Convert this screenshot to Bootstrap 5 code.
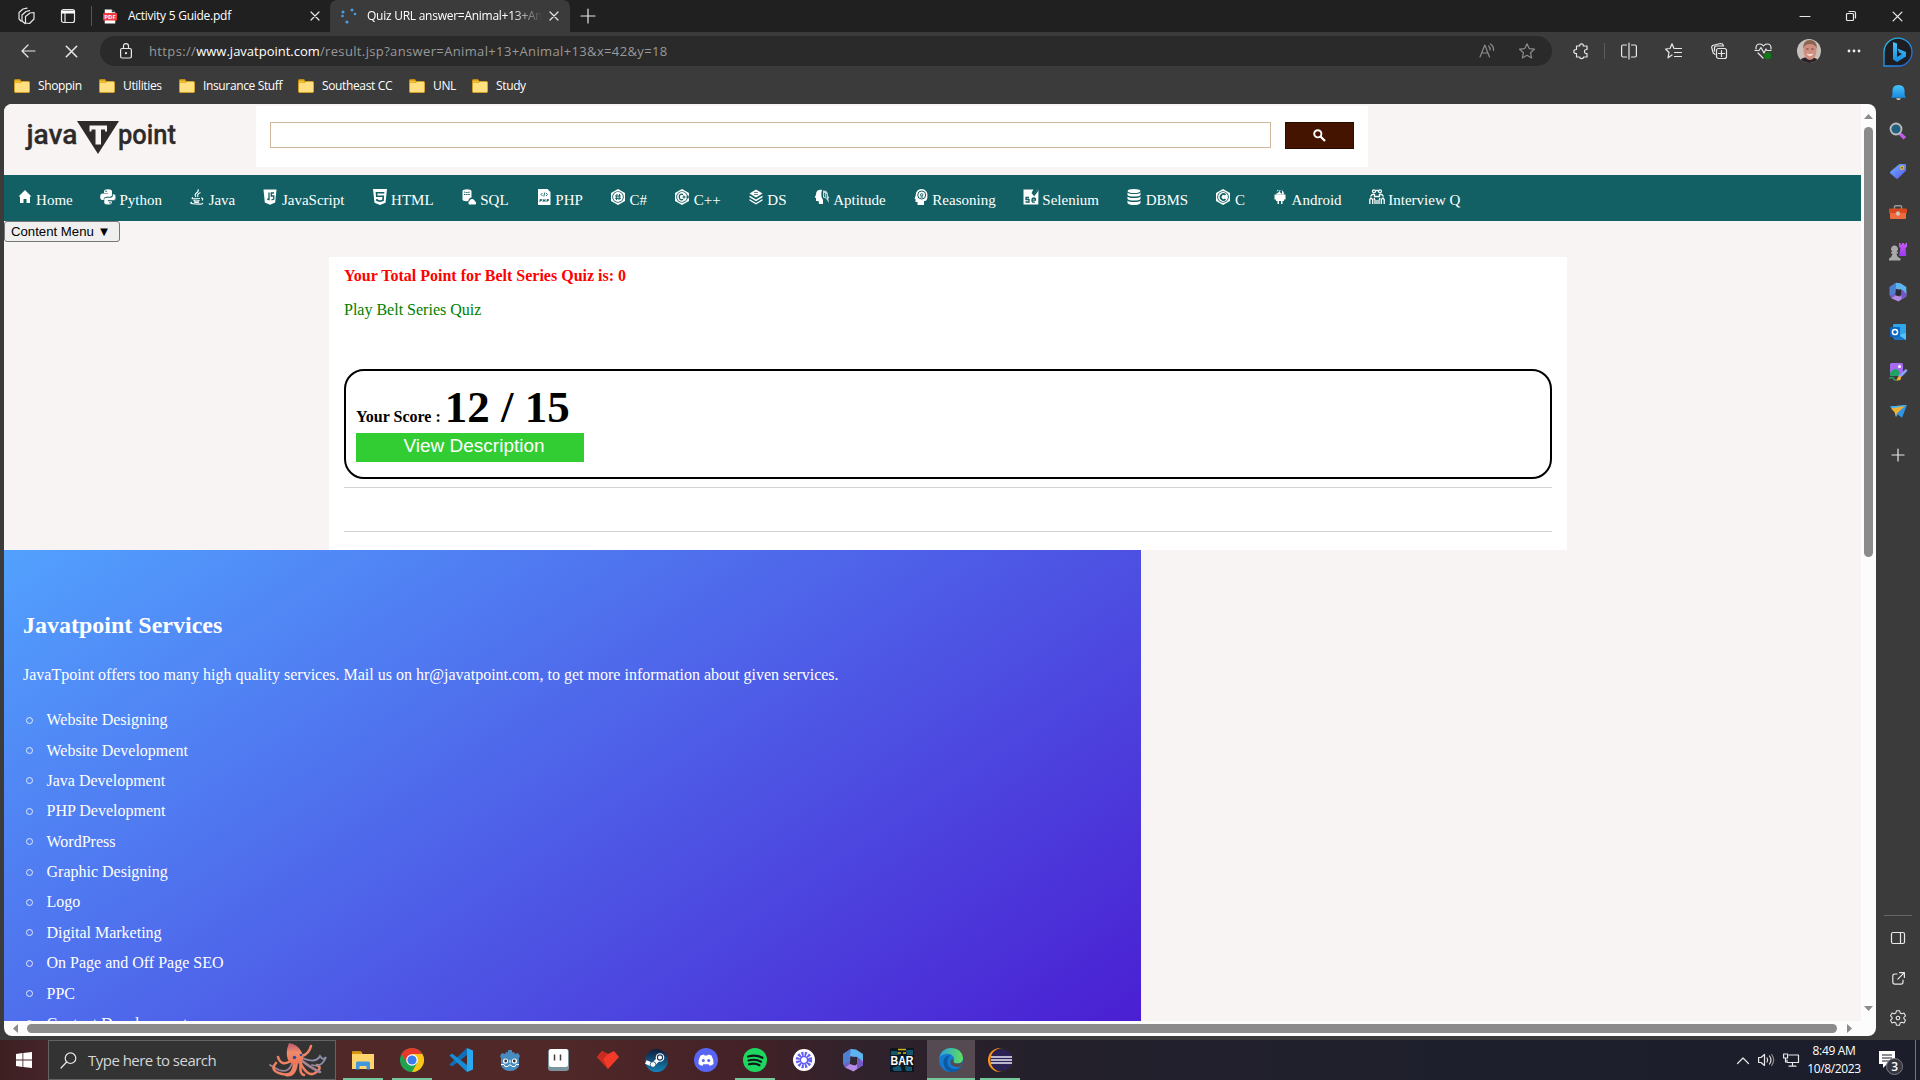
<!DOCTYPE html>
<html lang="en">
<head>
<meta charset="utf-8">
<title>Quiz result</title>
<link href="https://cdn.jsdelivr.net/npm/bootstrap@5.3.0/dist/css/bootstrap.min.css" rel="stylesheet">
<style>
body{width:1920px;height:1080px;overflow:hidden;background:#3b3b3b;font-family:"Open Sans","Noto Sans",sans-serif;font-size:12px;line-height:16px;color:#fff}
svg{display:block;overflow:visible;flex:none}
.ln{fill:none;stroke:#e8e8e8;stroke-width:1.2;stroke-linecap:round;stroke-linejoin:round}
.titlebar{height:32px;background:#202020}
.tab-pdf{width:238px;padding-left:10px}
.tab-on{width:240px;height:32px;background:#3b3b3b;border-radius:7px 7px 0 0;padding-left:10px}
.tab-text{letter-spacing:-.26px;white-space:nowrap;overflow:hidden}
.fade-end{width:176px;-webkit-mask-image:linear-gradient(90deg,#000 82%,transparent);mask-image:linear-gradient(90deg,#000 82%,transparent)}
.winbtn{width:46px}
.leftcol{width:1876px}
.tools{height:38px}
.addr{width:1456px;height:30px;border-radius:15px;background:#2a2a2a}
.url{font-size:13px;color:#999;white-space:nowrap;letter-spacing:.36px}
.url b{font-weight:400;color:#fff;letter-spacing:0}
.tcell{width:45px}
.bookmarks{height:34px;padding:0 0 2px 14px;letter-spacing:-.36px}
.bm{white-space:nowrap}
.viewport{width:1872px;height:932px;margin-left:4px;border-radius:8px;background:#fcfcfc;overflow:hidden}
.pagearea{width:1857px;height:917px;background:#f8f4f3;overflow:hidden;font-family:"Liberation Serif",serif;font-size:16px;color:#000}
.head{height:71px;padding-top:2px}
.logo-box{width:252px;padding:15px 0 0 20px}
.gsearch{width:1112px;height:61px;background:#fff;padding:16px 14px 0}
.gsearch input{width:1001px;height:26px;border:1px solid #cfb79c;outline:0}
.gsearch button{width:69px;height:27px;background:#451400;border:1px solid #2a0b00;margin-left:14px}
.topnav{height:46px;background:#125f64;font-size:15px;line-height:18px;color:#fff}
.topnav div{padding:16px 14.58px 0 12.5px;white-space:nowrap}
.topnav svg{width:16px;height:16px;margin:-2px 3.6px 0 0;fill:#fff}
.cmenu{width:116px;height:21px;border:1px solid #767676;border-radius:3px;background:#efefef;font:13.2px/17px "Liberation Sans",sans-serif;padding:0 0 0 6px;text-align:left;color:#000}
.resultcard{width:1238px;height:293px;margin:15px 0 0 325px;background:#fff;padding:10px 15px 0}
.red-line{color:red;font-weight:700;line-height:18px}
.green-line{color:green;line-height:18px;margin-top:16px}
.scorebox{height:110px;margin-top:50px;border:2px solid #000;border-radius:20px;padding:11px 10px 0;font-weight:700}
.scoreline{line-height:50px;height:51px;white-space:nowrap}
.scoreline span{font-size:45px}
.vd{width:228px;height:29px;background:#32cd32;color:#fff;font:19px/25px "Liberation Sans",sans-serif;text-align:center;padding-left:8px}
.rule1{height:1px;background:#d3d3d3;margin-top:8px}
.rule2{height:1px;background:#d3d3d3;margin-top:43px}
.services{width:1137px;height:471px;background:linear-gradient(146deg,#52a1fe,#4a1fd2);color:#fff;padding:61px 19px 0;overflow:hidden}
.services h2{font-size:24px;font-weight:700;line-height:28px;margin:0}
.services p{margin:26px 0 20px;line-height:20px}
.services ul{list-style:none;padding:0;margin:0}
.services li{height:30.38px;line-height:30px;display:flex;align-items:center}
.services li::before{content:"";width:7px;height:7px;border:1.2px solid #e3ebff;border-radius:50%;margin:0 13.5px 0 3px}
.vbar{width:15px;height:917px;padding:10px 0}
.vthumb{width:9px;height:430px;border-radius:5px;background:#8b8b8b;margin-top:8px}
.hbar{height:15px;padding:0 9px}
.hthumb{width:1810px;height:9px;border-radius:5px;background:#8b8b8b}
.sidebar{width:44px;padding:3px 0 2px}
.sidebar>div{height:40px;display:flex;align-items:center;justify-content:center}
.taskbar{height:40px;background:linear-gradient(90deg,#3d1f22 0,#45242a 48px,#502828 340px,#502828 560px,#422127 760px,#31222b 850px,#23202b 1050px,#1d1f2c 1500px,#1b1d2b)}
.startb{width:48px}
.tsearch{width:288px;height:40px;background:#333;border:1px solid #646464;color:#d6d6d6;font-size:15px;padding-left:11px}
.app{width:49px;height:40px;display:flex;align-items:center;justify-content:center;border:0 solid #76c79b}
.app.run{width:40px;margin:0 4.5px;border-bottom-width:2px;padding-top:2px}
.app.on{width:48px;margin:0 .5px;background:#564a52}
.clock{width:70px;text-align:center;line-height:18px;letter-spacing:-.35px}
</style>
<script src="https://cdn.jsdelivr.net/npm/bootstrap@5.3.0/dist/js/bootstrap.bundle.min.js"></script>
</head>
<body class="d-flex flex-column m-0">
<svg width="0" height="0" class="position-absolute">
 <defs>
  <linearGradient id="gb" x1="0" y1="0" x2="1" y2="1"><stop offset="0" stop-color="#27c4e8"/><stop offset="1" stop-color="#2360e8"/></linearGradient>
  <linearGradient id="gc" x1="0" y1="0" x2="0" y2="1"><stop offset="0" stop-color="#45c3fa"/><stop offset="1" stop-color="#1a8be0"/></linearGradient>
  <linearGradient id="gp" x1="0" y1="0" x2="1" y2="1"><stop offset="0" stop-color="#6fb4ff"/><stop offset="1" stop-color="#5a55f0"/></linearGradient>
  <linearGradient id="gv" x1="0" y1="0" x2="0" y2="1"><stop offset="0" stop-color="#c85cf5"/><stop offset="1" stop-color="#9a3af0"/></linearGradient>
  <linearGradient id="go" x1="0" y1="0" x2="0" y2="1"><stop offset="0" stop-color="#b9596c"/><stop offset=".45" stop-color="#f08a6c"/><stop offset="1" stop-color="#ef7350"/></linearGradient>
  <linearGradient id="gs" x1="0" y1="0" x2="0" y2="1"><stop offset="0" stop-color="#111d3a"/><stop offset="1" stop-color="#1482b8"/></linearGradient>
  <linearGradient id="ge" x1="0" y1="0" x2="1" y2="0"><stop offset="0" stop-color="#2a9fe0"/><stop offset="1" stop-color="#5ee05a"/></linearGradient>
  <symbol id="folder" viewBox="0 0 16 16"><path d="M0 2.500Q0 1 1.500 1H6l1.500 2H14.500Q16 3 16 4.500V13.500Q16 15 14.500 15H1.500Q0 15 0 13.500Z" fill="#c08a12"/><path d="M.8 5H6L8 3.800h6.500q.8 0 .8.900v8.600q0 .9-.8.900H1.600q-.8 0-.8-.9Z" fill="#ffdf80"/><path d="M.8 2.500h5L7 3.600 5.800 4.800H.8Z" fill="#f5c430"/></symbol>
  <symbol id="m365" viewBox="0 0 24 24"><path d="M9.500 1 14 4v7L9 13.500v2.800L4 19.500 2 16V6Z" fill="#6f63c4"/><path d="M9.500 1 15 1.500 22 6v8l-6-5-7-1Z" fill="#5cb5ee"/><path d="M9.500 1 9 8v5.500L2 16V6Z" fill="#4f7fd0"/><path d="m4 19.500 5-3.500 5 1.500 8-6V17l-9.500 6.500Z" fill="#b58ae6"/><path d="m16 9 6 5v3.500L16 20.500V15Z" fill="#7458c8"/><path d="m9.500 8.500 6 1v5l-3.500 2-3-1Z" fill="#2d2b33"/></symbol>
  <symbol id="xx" viewBox="0 0 10 10"><path d="M1 1 9 9M9 1 1 9" class="ln"/></symbol>
  <symbol id="cshield" viewBox="0 0 16 16"><path d="M8 0 15 4v8l-7 4-7-4V4Z" fill="#fff"/><circle cx="8" cy="8" r="5.800" fill="#125f64"/><circle cx="8" cy="8" r="4.900" fill="#fff"/></symbol>
 </defs>
</svg>

<header class="titlebar d-flex align-items-center">
 <svg width="18" height="18" viewBox="0 0 18 18" class="ln" style="margin-left:17px"><path d="M2 5.500 6 2l4-.8M2 5.500V12l2 2M5 8l4-3.500 3.500-.8M5 8v6l3 2.500M8.500 9.500 13 6l4-.5V12l-4.500 4.500-4-.5Z"/></svg>
 <svg width="16" height="16" viewBox="0 0 16 16" style="margin-left:25px"><rect x="1.500" y="1.500" width="13" height="13" rx="2" class="ln"/><path d="M1.500 2.500h13v3h-13Z" fill="#fff"/><path d="M5 5v9" class="ln"/></svg>
 <div style="width:1px;height:20px;background:#555;margin-left:15px"></div>
 <div class="tab-pdf d-flex align-items-center">
  <svg width="14" height="17" viewBox="0 0 16 18" style="margin:0 1px"><path d="M2 1h8l4 3v13H2Z" fill="#fff"/><path d="M10 1v3h4" fill="#333"/><rect y="5" width="16" height="8.500" rx="1" fill="#f03c3c"/><text x="1.500" y="11.500" font-size="6" font-weight="700" fill="#fff" textLength="13" lengthAdjust="spacingAndGlyphs">PDF</text></svg>
  <span class="tab-text" style="margin-left:10px;width:180px">Activity 5 Guide.pdf</span>
  <svg width="10" height="10" style="margin-left:2px"><use href="#xx"/></svg>
 </div>
 <div class="tab-on d-flex align-items-center">
  <svg width="16" height="16" viewBox="0 0 16 16" fill="#4d9de0"><circle cx="3" cy="4" r="1.500"/><circle cx="2.500" cy="8" r="1.300"/><circle cx="12" cy="2" r="1.500"/><circle cx="15" cy="6" r="1.300"/><circle cx="7" cy="14" r="1.600"/></svg>
  <span class="tab-text fade-end" style="margin-left:11px">Quiz URL answer=Animal+13+An</span>
  <svg width="10" height="10" style="margin-left:6px"><use href="#xx"/></svg>
 </div>
 <svg width="14" height="14" viewBox="0 0 14 14" class="ln" style="margin-left:11px"><path d="M7 0v14M0 7h14"/></svg>
 <div class="d-flex ms-auto">
  <div class="winbtn d-flex justify-content-center"><svg width="10" height="10" class="ln"><path d="M0 5.500h10"/></svg></div>
  <div class="winbtn d-flex justify-content-center"><svg width="10" height="10" class="ln"><rect x=".5" y="2.500" width="7" height="7" rx="1"/><path d="M3 .5h5q1.500 0 1.500 1.500v5"/></svg></div>
  <div class="winbtn d-flex justify-content-center"><svg width="11" height="11"><use href="#xx"/></svg></div>
 </div>
</header>

<main class="d-flex" style="height:1008px">
 <section class="leftcol">
  <div class="tools d-flex align-items-center">
   <svg width="14" height="12" class="ln" style="margin-left:21px"><path d="M14 6H1M7 0 1 6l6 6"/></svg>
   <svg width="13" height="13" style="margin-left:30px"><use href="#xx"/></svg>
   <div class="addr d-flex align-items-center" style="margin-left:22px">
    <svg width="12" height="16" viewBox="0 0 12 16" class="ln" style="margin-left:20px"><rect x=".6" y="5.500" width="10.800" height="9.500" rx="1.500"/><path d="M3.500 5.500V3q0-2.300 2.500-2.300T8.500 3v2.500"/><circle cx="6" cy="10.200" r=".5" fill="#fff"/></svg>
    <span class="url" style="margin-left:17px">https://<b>www.javatpoint.com</b>/result.jsp?answer=Animal+13+Animal+13&amp;x=42&amp;y=18</span>
    <svg width="16" height="16" viewBox="0 0 16 16" class="ln ms-auto" style="stroke:#8c8c8c;margin-right:24px"><path d="M1 14 5.800 2 10.500 14M2.800 10h6M9.500 3q2 1.500 1.500 4M11.500 1q3.500 2.500 3 6.500"/></svg>
    <svg width="16" height="16" viewBox="0 0 16 16" class="ln" style="stroke:#8c8c8c;margin-right:17px"><path d="m8 .8 2.200 4.800 5.200.6-3.900 3.500 1.100 5.200L8 12.300l-4.600 2.600 1.100-5.200L.6 6.200l5.200-.6Z"/></svg>
   </div>
   <div class="d-flex align-items-center" style="margin-left:6.500px">
    <div class="tcell d-flex justify-content-center"><svg width="16" height="16" viewBox="0 0 16 16" class="ln"><path d="M3.500 3h3.200Q6.500.8 8.500.8T10.300 3H14v3.500Q11.500 6.300 11.500 8.500T14 10.500V14h-3.500q0 1.700-1.900 1.700T6.700 14H3.500V10.500Q.8 10.700.8 8.500T3.500 6.500Z"/></svg></div>
    <div style="width:1px;height:16px;background:#5c5c5c;margin-right:1.500px"></div>
    <div class="tcell d-flex justify-content-center"><svg width="16" height="16" viewBox="0 0 16 16" class="ln"><path d="M8 0v16M5.500 2H2Q.6 2 .6 3.500v9Q.6 14 2 14h3.500M10.500 2H14q1.400 0 1.400 1.500v9Q15.400 14 14 14h-3.500"/></svg></div>
    <div class="tcell d-flex justify-content-center"><svg width="17" height="16" viewBox="0 0 17 16" class="ln"><path d="M9 5.500 7 .8 5 5.500.6 6l3.400 3.500-1 5.300L7 12M10 5.500h6.500M9.500 9.500h7M9.500 13.500h7"/></svg></div>
    <div class="tcell d-flex justify-content-center"><svg width="16" height="16" viewBox="0 0 16 16" class="ln"><rect x="5.500" y="5.500" width="10" height="10" rx="2"/><path d="M10.500 7.500v6M7.500 10.500h6M12.500 3 11.500 1 9.500.5 1.500 2.500.6 4l1.600 6 1.800 1.300M3.500 8V5q0-2 2-2h6"/></svg></div>
    <div class="tcell d-flex justify-content-center"><svg width="17" height="16" viewBox="0 0 17 16" class="ln"><path d="M1 6Q.5 1 5 1q2 0 3.500 2Q10 1 12 1q4.500 0 4 5M0 7.500h4l2-3 3 5.500 2-4 1 1.500h4M3 10l5 5"/><circle cx="12.800" cy="12.800" r="3.500" fill="#0f7b16" stroke="none"/></svg></div>
    <div class="tcell d-flex justify-content-center"><svg width="24" height="24" viewBox="0 0 24 24"><defs><clipPath id="av"><circle cx="12" cy="12" r="12"/></clipPath></defs><g clip-path="url(#av)"><rect width="24" height="24" fill="#c9c0bb"/><path d="M2 24q1-6 10-6t10 6Z" fill="#2a2224"/><ellipse cx="13" cy="12" rx="6.500" ry="9" fill="#cf8f80"/><path d="M6 10Q6 1 13 1t7 9Q18 5 13 5T6 10Z" fill="#8a6552"/><path d="M9.500 14.500q3.500 1 7 0-1 2.500-3.500 2.500t-3.500-2.500Z" fill="#f5dcd4"/><path d="M9.500 10h2M14.500 10h2" stroke="#603030"/></g></svg></div>
    <div class="tcell d-flex justify-content-center"><svg width="14" height="4" fill="#eee"><circle cx="2" cy="2" r="1.400"/><circle cx="7" cy="2" r="1.400"/><circle cx="12" cy="2" r="1.400"/></svg></div>
   </div>
  </div>
  <nav class="bookmarks d-flex align-items-center">
   <div class="bm d-flex" style="width:85px"><svg width="16" height="16" class="me-2"><use href="#folder"/></svg>Shoppin</div>
   <div class="bm d-flex" style="width:80px"><svg width="16" height="16" class="me-2"><use href="#folder"/></svg>Utilities</div>
   <div class="bm d-flex" style="width:119px"><svg width="16" height="16" class="me-2"><use href="#folder"/></svg>Insurance Stuff</div>
   <div class="bm d-flex" style="width:111px"><svg width="16" height="16" class="me-2"><use href="#folder"/></svg>Southeast CC</div>
   <div class="bm d-flex" style="width:63px"><svg width="16" height="16" class="me-2"><use href="#folder"/></svg>UNL</div>
   <div class="bm d-flex"><svg width="16" height="16" class="me-2"><use href="#folder"/></svg>Study</div>
  </nav>

  <div class="viewport">
   <div class="d-flex">
    <div class="pagearea">
     <div class="head d-flex">
      <div class="logo-box"><svg width="156" height="34" viewBox="0 0 156 34" fill="#2d2a29" font-family="Roboto" font-weight="500" font-size="27"><text x="2.500" y="22.500" textLength="51" lengthAdjust="spacingAndGlyphs" stroke="#2d2a29" stroke-width=".3">java</text><path d="M53 0h42L74 33Z"/><path d="M65.500 4.500h17.500v6h-2v-2h-4v15h-5.500v-15h-4v2h-2Z" fill="#f8f4f3"/><text x="94" y="22.500" textLength="58" lengthAdjust="spacingAndGlyphs" stroke="#2d2a29" stroke-width=".3">point</text></svg></div>
      <div class="gsearch d-flex align-items-start"><input type="text"><button class="d-flex align-items-center justify-content-center p-0"><svg width="13" height="13" viewBox="0 0 13 13" fill="none" stroke="#fff"><circle cx="4.800" cy="4.800" r="3.600" stroke-width="1.900"/><path d="m7.500 7.500 4.500 4.500" stroke-width="2.300"/></svg></button></div>
     </div>
     <div class="topnav d-flex">
      <div class="d-flex"><svg viewBox="0 0 16 16"><path d="M8 1 14.500 7.500H13V14H9.500V10h-3v4H3V7.500H1.500Z"/></svg>Home</div>
      <div class="d-flex"><svg viewBox="0 0 16 16"><path d="M4 4V2.500Q4 .2 8 .2t4 2.300V6q0 1.800-2 1.800H6Q4.200 7.800 4.200 9.500V11H2.500Q.2 11 .2 7.800T2.500 4.500H8V4Z"/><path d="M12.700 5h1q2.100 0 2.100 3.200t-2.300 3.300H8V12h4v1.500q0 2.300-4 2.300t-4-2.300V10q0-1.500 2-1.500h4.500q2.200 0 2.200-2Z" stroke="#125f64" stroke-width=".5"/><circle cx="6" cy="2.200" r=".8" fill="#125f64"/><circle cx="10" cy="13.700" r=".8" fill="#125f64"/></svg>Python</div>
      <div class="d-flex"><svg viewBox="0 0 16 16"><g fill="none" stroke="#fff" stroke-width="1.100"><path d="M9 .3q1 2-1.500 3.700T7 8M11.500 3.500Q7.500 5 9 8M4 8.500q-2 1 0 1.300t7-.3M12 9q3 0 1 2.500M4.500 11.500q3 1 6 0M5 13q3 1 5 0M3 13q-4 1.500 4 2t6.500-1.200"/></g></svg>Java</div>
      <div class="d-flex"><svg viewBox="0 0 16 16"><path d="M1.500.5h13l-1.300 13L8 15.700 2.800 13.500Z"/><path d="M7 3.500v7.200L5 10M12 4H9.300v3h2.500v3l-2.300.8" fill="none" stroke="#125f64" stroke-width="1.300"/></svg>JavaScript</div>
      <div class="d-flex"><svg viewBox="0 0 16 16"><path d="M1 0h14l-1.500 13.800L8 16l-5.500-2.200Z"/><path d="M12.300 3.700H4.500l.3 3.600h6.500l-.3 4-3 .9-3-.9-.1-1.300" fill="none" stroke="#125f64" stroke-width="1.600"/></svg>HTML</div>
      <div class="d-flex"><svg viewBox="0 0 16 16"><path d="M1.500 2Q2 .3 6 .3T10.500 2v6.500Q8 8.500 7.300 12 2 12.500 1.500 11Z"/><path d="M3 5.500h6M3 3Q6 4 9 3" stroke="#125f64" stroke-dasharray="1.500 .6" fill="none"/><path d="M8 15.500Q6.500 13 8.500 12q.5-2.500 3-2t2.500 2.500q2 1 .5 3Z"/></svg>SQL</div>
      <div class="d-flex"><svg viewBox="0 0 16 16"><path d="M2 0h9.500L14.500 3v13H2Z"/><path d="M6.500 4 5 5.500 6.500 7M10 4l1.500 1.500L10 7M8.800 3.500l-1 4M4 13v-2.500h1.500v1H4M7.200 10v3M9 10v3M7.200 11.500H9M11 13v-2.500h1.500v1H11" fill="none" stroke="#125f64" stroke-width=".9"/></svg>PHP</div>
      <div class="d-flex"><svg viewBox="0 0 16 16"><use href="#cshield"/><path d="M7 5 6.500 11M9.500 5 9 11M5 7h6M5 9.300h6" stroke="#125f64" stroke-width="1"/></svg>C#</div>
      <div class="d-flex"><svg viewBox="0 0 16 16"><use href="#cshield"/><path d="M9 5.800Q7.500 4.500 6 5.800t0 4.400q1.500 1.300 3 0M8.500 8h3M10 6.500v3M12.300 8h3M13.800 6.500v3" stroke="#125f64" stroke-width="1.200" fill="none"/></svg>C++</div>
      <div class="d-flex"><svg viewBox="0 0 16 16"><path d="m8 .5 6.500 4L8 8.500l-6.500-4ZM1.500 6.500 8 10.500l6.500-4v1.700L8 12.200 1.500 8.200ZM1.500 10 8 14l6.500-4v1.500L8 15.500l-6.500-4Z"/><path d="M6 3.500h4M6 5.500h4" stroke="#125f64" stroke-width=".7"/></svg>DS</div>
      <div class="d-flex"><svg viewBox="0 0 16 16"><path d="M8 .8Q2 0 2 5.500L.8 8.500 2 9v3h2.500L5 15h4V11L7.500 8Q7 3 8 .8Z"/><path d="M9 1.500q5-.5 5 5l1.300 2.500-1 .5.700 4.500-3-4.500-3-1Z" opacity=".75"/><path d="M10.500 4v4M12.300 5v4" stroke="#125f64" stroke-width=".8"/></svg>Aptitude</div>
      <div class="d-flex"><svg viewBox="0 0 16 16"><path d="M8.500 0Q14.500.5 14.500 6.500T11 12v4H4.500v-3H2.500v-3L1.500 9.500l1.200-3Q3 0 8.500 0Z"/><circle cx="8.700" cy="6" r="4" fill="none" stroke="#125f64" stroke-width="1"/><circle cx="8.700" cy="5.800" r="1.200" fill="none" stroke="#125f64"/><path d="M7.500 8h2.500" stroke="#125f64"/></svg>Reasoning</div>
      <div class="d-flex"><svg viewBox="0 0 16 16"><path d="M.5.500h10L9 3l2 2.500L14.500.5l1 .7-.2 14.300H.5Z"/><path d="M9 3.500 11.200 6 15 1" stroke="#125f64" stroke-width="1.500" fill="none"/><path d="M6 8.500H3v2h3v2.500H2.500M9 11.200h3.500Q12.500 9 10.800 9T9 11.200t1.800 2H12" fill="none" stroke="#125f64" stroke-width="1.300"/></svg>Selenium</div>
      <div class="d-flex"><svg viewBox="0 0 16 16"><ellipse cx="8" cy="2" rx="6.500" ry="2"/><path d="M1.500 3.500Q3 5 8 5t6.500-1.500V6Q13 7.500 8 7.500T1.500 6ZM1.500 7.500Q3 9 8 9t6.500-1.500V10Q13 11.500 8 11.500T1.500 10ZM1.500 11.500Q3 13 8 13t6.500-1.500V14Q13 16 8 16T1.500 14Z"/></svg>DBMS</div>
      <div class="d-flex"><svg viewBox="0 0 16 16"><use href="#cshield"/><path d="M10.500 5.800Q8.500 4 6.500 5.800t0 4.400q2 1.800 4 0" fill="none" stroke="#125f64" stroke-width="1.800"/></svg>C</div>
      <div class="d-flex"><svg viewBox="0 0 16 16"><path d="M4 5Q4.200 2.500 6 1.600L5.300.5M4 5h8Q11.800 2.500 10 1.600L10.700.5M6 1.600h4V5M4 5.200h8v6.800h-1.500v3H9v-3H7v3H5.500v-3H4ZM2.500 5.500H4v5H2.500ZM12 5.500h1.500v5H12Z"/></svg>Android</div>
      <div class="d-flex"><svg viewBox="0 0 16 16"><g fill="none" stroke="#fff" stroke-width="1.300"><circle cx="5" cy="2.300" r="1.500"/><circle cx="11" cy="2.300" r="1.500"/><path d="M7 1.500h2M1.500 7.500Q3 4.500 5.500 5.500v2h5v-2q2.500-1 4 2M.8 15v-4.500L2 9l1.700 1.500V15M6 15v-3.500L5 9M10 15v-3.500L11 9M15.200 15v-4.500L14 9l-1.700 1.500V15M8 11v4"/></g></svg>Interview Q</div>
     </div>
     <button class="cmenu d-block">Content Menu ▼</button>
     <div class="resultcard">
      <div class="red-line">Your Total Point for Belt Series Quiz is: 0</div>
      <div class="green-line">Play Belt Series Quiz</div>
      <div class="scorebox">
       <div class="scoreline">Your Score : <span>12 / 15</span></div>
       <div class="vd">View Description</div>
      </div>
      <div class="rule1"></div>
      <div class="rule2"></div>
     </div>
     <div class="services">
      <h2>Javatpoint Services</h2>
      <p>JavaTpoint offers too many high quality services. Mail us on hr@javatpoint.com, to get more information about given services.</p>
      <ul><li>Website Designing</li><li>Website Development</li><li>Java Development</li><li>PHP Development</li><li>WordPress</li><li>Graphic Designing</li><li>Logo</li><li>Digital Marketing</li><li>On Page and Off Page SEO</li><li>PPC</li><li>Content Development</li></ul>
     </div>
    </div>
    <div class="vbar d-flex flex-column align-items-center">
     <svg width="9" height="5" fill="#8b8b8b"><path d="M0 5 4.500 0 9 5Z"/></svg>
     <div class="vthumb"></div>
     <svg width="9" height="5" fill="#8b8b8b" class="mt-auto"><path d="M0 0 4.500 5 9 0Z"/></svg>
    </div>
   </div>
   <div class="hbar d-flex align-items-center">
    <svg width="5" height="9" fill="#8b8b8b"><path d="M5 0 0 4.500 5 9Z"/></svg>
    <div class="hthumb" style="margin-left:9px"></div>
    <svg width="5" height="9" fill="#8b8b8b" style="margin-left:10px"><path d="M0 0 5 4.500 0 9Z"/></svg>
   </div>
  </div>
 </section>

 <aside class="sidebar d-flex flex-column">
  <div style="height:33px"><svg width="30" height="30" viewBox="0 0 30 30"><path d="M1 29V15A14 14 0 1 1 16 29Z" fill="#1d1d22" stroke="url(#gb)" stroke-width="1.300"/><path d="m10 5 4 1.500V20l5-3-3-1.500-1.500-4 8.500 3.500v4.500L14 25l-4-2.500Z" fill="url(#gc)"/></svg></div>
  <div style="height:48px"><svg width="15" height="17" viewBox="0 0 16 17"><path d="M5.500 14.500h5Q10 16.500 8 16.500t-2.500-2Z" fill="#ccc"/><path d="M1.500 7Q1.500.5 8 .5T14.500 7v4l1.200 3H.3l1.200-3Z" fill="url(#gc)"/></svg></div>
  <div style="height:30px"><svg width="18" height="18" viewBox="0 0 18 18"><path d="m11 10.500 5 4.500-1.500 1.500L10 12Z" stroke="#c55cf0" stroke-width="1.500" fill="#b44be8"/><circle cx="7" cy="7" r="5.500" fill="#205f80" stroke="#bdbdbd" stroke-width="1.800"/></svg></div>
  <div style="height:50px"><svg width="17" height="17" viewBox="0 0 18 17"><path d="M10 .5h6q1 0 1 1v6L8.500 16q-1 .8-2 0l-6-5.500q-1-1 0-2Z" fill="url(#gp)"/><circle cx="13" cy="4.500" r="1.700" fill="#555" stroke="#f0c420" stroke-width="1.300"/></svg></div>
  <div style="height:32px"><svg width="18" height="15" viewBox="0 0 18 15"><path d="M5.500 4V1.500q0-.8.800-.8h5.400q.8 0 .8.800V4" fill="none" stroke="#999" stroke-width="1.400"/><rect y="3.500" width="18" height="5" rx="1" fill="#d84a1e"/><path d="M1 8h16v5q0 1-1 1H2q-1 0-1-1Z" fill="#ef6a3c"/><rect x="7.300" y="6.500" width="3.400" height="4" rx="1" fill="#ccc"/></svg></div>
  <div style="height:48px"><svg width="18" height="18" viewBox="0 0 18 18"><path d="M10 0h1.600v1.500h1.500V0h1.800v1.500h1.500V0H18v4l-1.500 1 .8 8H10L11.500 5 10 4Z" fill="url(#gv)"/><path d="M0 17.500V15.500q3-1 3.500-5H2V9h1.500Q2 7.500 2 6q.5-3.500 3.500-3.500T9 6q0 1.500-1.500 3H9v1.500H7.500q.5 4 4 5v2Z" fill="#a9a9a9"/></svg></div>
  <div style="height:32px"><svg width="20" height="20"><use href="#m365"/></svg></div>
  <div style="height:48px"><svg width="16" height="16" viewBox="0 0 16 16"><rect x="3" width="13" height="14" rx="1" fill="#2fa5ea"/><path d="m4 9 6 4 6-4v7H4Z" fill="#1b73c8"/><path d="M9 11 16 9v7" fill="#55c3f5"/><rect y="3" width="10" height="10" rx="1" fill="#0a66c0"/><circle cx="5" cy="8" r="2.600" fill="none" stroke="#fff" stroke-width="1.500"/></svg></div>
  <div style="height:32px"><svg width="18" height="18" viewBox="0 0 18 18"><rect x="1" width="13" height="13" rx="1.500" fill="#a66bf0"/><path d="M1 10q2-3.500 5-4t5 3.500l-2 3.500H3Q1 13 1 11Z" fill="#1fa562"/><circle cx="10.500" cy="3.500" r="1.500" fill="#fff"/><path d="m17 7.500-6 6" stroke="#8aa0f8" stroke-width="2.500" stroke-linecap="round"/><path d="M11.500 13Q9 12.500 8.500 15L7 17.500q4 .5 5-1.500Z" fill="#f5b030"/><path d="M0 15.500q4-2 4.500 0T7 17" fill="none" stroke="#1fa562" stroke-width="1.300"/></svg></div>
  <div style="height:46px"><svg width="17" height="13" viewBox="0 0 17 13"><path d="M0 1.500 17 0l-5 12.500-4-3-2 2.500-1-5Z" fill="#2f93e8"/><path d="M0 1.500 17 0 4.500 6Z" fill="#45b4f0"/><path d="m1 3.500 14-2.500L6.800 8.500 6 12 4.500 7Z" fill="#f0b030"/><path d="M8 9.500 16 1l-4 11.500Z" fill="#2f93e8"/></svg></div>
  <div style="height:42px"><svg width="12" height="12" class="ln"><path d="M6 0v12M0 6h12"/></svg></div>
  <div class="mt-auto" style="width:28px;height:1px;background:#666;margin:0 8px 2px"></div>
  <div><svg width="14" height="12" class="ln"><rect x=".5" y=".5" width="13" height="11" rx="1.500"/><path d="M9.500.5v11"/></svg></div>
  <div><svg width="13" height="13" class="ln"><path d="M5 2H3Q.8 2 .8 4v6q0 2.200 2.200 2.200h6q2 0 2-2.200V8M7.500.6h4.900V5.500M12.300.7 5.800 7.200"/></svg></div>
  <div><svg width="16" height="16" viewBox="0 0 18 18" class="ln"><path d="m7.300.8h3.400l.7 2.500 1.800 1 2.500-.8 1.700 3-1.800 1.700v1.600l1.800 1.700-1.700 3-2.500-.8-1.800 1-.7 2.500H7.300l-.7-2.500-1.800-1-2.500.8-1.700-3 1.800-1.700V8.200L.6 6.500l1.700-3 2.500.8 1.800-1Z"/><circle cx="9" cy="9" r="2"/></svg></div>
 </aside>
</main>

<footer class="taskbar d-flex">
 <div class="startb d-flex align-items-center justify-content-center"><svg width="16" height="16" viewBox="0 0 16 16" fill="#fff"><path d="m0 2 6.500-1v6.600H0ZM7.300.9 16 0v7.600H7.300ZM0 8.400h6.500V15L0 14ZM7.300 8.400H16V16l-8.700-1Z"/></svg></div>
 <div class="tsearch d-flex align-items-center">
  <svg width="17" height="17" viewBox="0 0 17 17" class="ln"><circle cx="10.500" cy="6.200" r="5.300"/><path d="M6.700 10 1 16"/></svg>
  <span style="margin-left:11px;letter-spacing:-.52px" class="text-nowrap">Type here to search</span>
  <svg width="58" height="36" viewBox="0 0 58 36" class="ms-auto" style="margin-right:8px"><g fill="none" stroke="#ee8163" stroke-width="2.600" stroke-linecap="round"><path d="M24 18q-3 14-14 10-6-3-9-5" stroke="#9c8296" stroke-width="1.800"/><path d="M25 18q1 17-12 14T7 21"/><path d="M28 18q-1 17-11 15"/><path d="M30 18q8 18 16 13t2-8"/><path d="M32 18q10 8 19 12" stroke="#a98595"/><path d="M33 16q14 6 18-2 3 5 6 1-4 11-14 8" stroke="#8d8eaa" stroke-width="1.800"/><path d="M33 14q7-2 9-10M22 19Q12 25 9 15M32 20q-2 12 3 13"/></g><path d="M20 1q8 1 12 8 5 8-1 12-8 3-12-3-3-7 1-17Z" fill="url(#go)"/><circle cx="25.500" cy="15.500" r="1.800" fill="#2f4ea0"/><circle cx="32" cy="13" r="1.300" fill="#2f4ea0"/></svg>
 </div>
 <div class="d-flex" style="margin-left:2px">
  <div class="app run"><svg width="22" height="19" viewBox="0 0 22 19"><path d="M0 1.500Q0 .5 1 .5h8L10.500 3H22v15H0Z" fill="#ffd56b"/><path d="M0 .5h9L10 3H0Z" fill="#d9980a"/><path d="M4 18.500V12q0-1.500 1.500-1.500h11Q18 10.500 18 12v6.500h-3.500V15h-7v3.500Z" fill="#3f98dc"/></svg></div>
  <div class="app run"><svg width="24" height="24" viewBox="0 0 24 24"><circle cx="12" cy="12" r="12" fill="#1fa350"/><path d="M12 0A12 12 0 0 1 22.400 6H12L7 15 1.600 6A12 12 0 0 1 12 0Z" fill="#e8382b"/><path d="M22.400 6A12 12 0 0 1 12 24l5-9L12 6Z" fill="#fbc517"/><circle cx="12" cy="12" r="5.800" fill="#fff"/><circle cx="12" cy="12" r="4.600" fill="#3b7ded"/></svg></div>
  <div class="app"><svg width="24" height="24" viewBox="0 0 24 24"><path d="M18 0 24 2.500v19L18 24Z" fill="#2aa8f0"/><path d="M18 0v7L3 18.500.5 16.500Z" fill="#0f6fb8"/><path d="M18 24v-7L3 5.500.5 7.500Z" fill="#168bd6"/></svg></div>
  <div class="app"><svg width="22" height="22" viewBox="0 0 22 22"><path d="M1 7 3 4l3 1 1-2 2 .5V1h4v2.500L15 3l1 2 3-1 2 3-1 2v8q-3 5-9 5t-9-5V9Z" fill="#478cbf"/><circle cx="6.500" cy="12" r="2.600" fill="#fff"/><circle cx="15.500" cy="12" r="2.600" fill="#fff"/><circle cx="6.700" cy="12" r="1.400" fill="#333"/><circle cx="15.300" cy="12" r="1.400" fill="#333"/><path d="M11 11v3M2 15.500h3l1 2h3l1-1.500h2l1 1.500h3l1-2h3" stroke="#fff" fill="none"/></svg></div>
  <div class="app"><svg width="21" height="22" viewBox="0 0 21 22"><rect width="21" height="22" rx="3" fill="#7d939d"/><rect x="1" width="19" height="18" rx="2" fill="#fff"/><path d="M6.500 5.500v6M12.500 5.500v6" stroke="#443e44" stroke-width="1.500"/></svg></div>
  <div class="app"><svg width="22" height="18" viewBox="0 0 22 18"><path d="m5 0 6 3 6-3 5 6-11 12L0 6Z" fill="#f23a29"/><path d="m5 0 6 3-5 5-6-2ZM6 8l5 10L0 6Z" fill="#c92b21"/></svg></div>
  <div class="app"><svg width="23" height="23" viewBox="0 0 23 23"><circle cx="11.500" cy="11.500" r="11.500" fill="url(#gs)"/><path d="m.8 13 7 2.800 7-7" stroke="#fff" stroke-width="4" fill="none"/><circle cx="15" cy="8.500" r="4.300" fill="#fff"/><circle cx="15" cy="8.500" r="2.600" fill="#fff" stroke="#1a3658" stroke-width="1.100"/><circle cx="8" cy="15.500" r="2.800" fill="#fff" stroke="#1a5078" stroke-width=".8"/></svg></div>
  <div class="app"><svg width="24" height="24" viewBox="0 0 24 24"><circle cx="12" cy="12" r="12" fill="#5865f2"/><path d="M6.500 7.500 10 6.500l.6 1h2.800l.6-1 3.500 1q2.500 4.500 2 8.500-2 1.500-4 1.700l-.8-1.500H9.300l-.8 1.500q-2-.2-4-1.700-.5-4 2-8.500Z" fill="#fff"/><circle cx="9.300" cy="12.500" r="1.500" fill="#5865f2"/><circle cx="14.700" cy="12.500" r="1.500" fill="#5865f2"/></svg></div>
  <div class="app run"><svg width="24" height="24" viewBox="0 0 24 24"><circle cx="12" cy="12" r="12" fill="#1ed760"/><path d="M5 8.500q8-2.300 14.500 1.300M5.500 12.500q7-2 12.500 1.200M6 16.200q6-1.500 10.500 1" fill="none" stroke="#10191a" stroke-width="2.200" stroke-linecap="round"/></svg></div>
  <div class="app"><svg width="22" height="22" viewBox="0 0 22 22"><circle cx="11" cy="11" r="11" fill="#fff"/><circle cx="11" cy="11" r="5.700" fill="none" stroke="#625df5" stroke-width="5" stroke-dasharray="1.900 1.080"/><circle cx="11" cy="11" r="3.500" fill="none" stroke="#625df5" stroke-width="1.500"/><circle cx="11" cy="11" r="2.500" fill="#fff"/></svg></div>
  <div class="app"><svg width="24" height="24"><use href="#m365"/></svg></div>
  <div class="app"><svg width="24" height="24" viewBox="0 0 24 24"><rect width="24" height="24" fill="#0b1720"/><path d="M1 3h6l3 4H1ZM16 2h7v5h-6ZM2 20l8-3 2 6H4ZM15 18l7 1v4h-6Z" fill="#14566e"/><path d="M8 1.500h8M8 5h3M13 5h3" stroke="#d9b31e" stroke-width="1.500"/><text x=".5" y="16.500" font-family="Liberation Sans" font-size="12" font-weight="700" fill="#fff" textLength="23" lengthAdjust="spacingAndGlyphs">BAR</text></svg></div>
  <div class="app run on"><svg width="24" height="24" viewBox="0 0 24 24"><circle cx="12" cy="12" r="12" fill="#1479cf"/><path d="M.2 10.500Q2 0 12 0q11 .5 12 10 0 5.500-5.500 5.500-4 0-4-2 1.500-2 0-4.500-3-4-8-3T.2 10.500Z" fill="url(#ge)"/><path d="M8.500 12q-1 6 4 8.500 5 2 9.700-2-3.500 5.500-10 5.500Q5 22 4.500 15t7-8q-2.500 2-3 5Z" fill="#0c59a4"/><path d="M14.500 13.500q0 2 4 2 3.500 0 5-2.500-.5 4-1.500 5-5 2.500-9.500-1-2-2.500 0-5.500 2-1 2 2Z" fill="#564a52"/></svg></div>
  <div class="app run"><svg width="24" height="24" viewBox="0 0 24 24"><circle cx="12" cy="12" r="12" fill="#f7941e"/><circle cx="14.500" cy="12" r="12" fill="#2c222c"/><circle cx="13.500" cy="12" r="10.800" fill="#2c2255"/><path d="M3 9h21M3 12h21M3 15h21" stroke="#e8e6f2" stroke-width="1.700"/></svg></div>
 </div>
 <div class="d-flex align-items-center ms-auto">
  <svg width="12" height="7" class="ln"><path d="M.5 6.500 6 1l5.500 5.500"/></svg>
  <svg width="16" height="14" viewBox="0 0 16 14" class="ln" style="margin-left:9px"><path d="M.6 4.500H3L6.500 1.500v11L3 9.500H.6ZM9 5q1.500 2 0 4M11.500 3q3 4 0 8"/><path d="M13.700 1.500q4 5.500 0 11" stroke="#888"/></svg>
  <svg width="16" height="14" viewBox="0 0 16 14" class="ln" style="margin-left:9px"><path d="M6 2h9.500v7.500H4V7M9.500 9.500V13M6 13.200h7M.6 1h4v4h-4ZM2.500 5v4"/></svg>
  <div class="clock">8:49 AM<br>10/8/2023</div>
  <svg width="25" height="25" viewBox="0 0 25 25" style="margin-left:10px;margin-top:6px"><path d="M0 0h16v13H8l-4 4v-4H0Z" fill="#fff"/><path d="M3 4h10M3 7h10M3 10h7" stroke="#1d1f2c"/><circle cx="15.500" cy="15.500" r="8" fill="#35363f" stroke="#7c7c83"/><text x="12.300" y="20" font-size="12" font-weight="600" fill="#fff">3</text></svg>
  <div style="width:1px;height:40px;background:#777;margin:0 4px 0 11px"></div>
 </div>
</footer>
</body>
</html>
